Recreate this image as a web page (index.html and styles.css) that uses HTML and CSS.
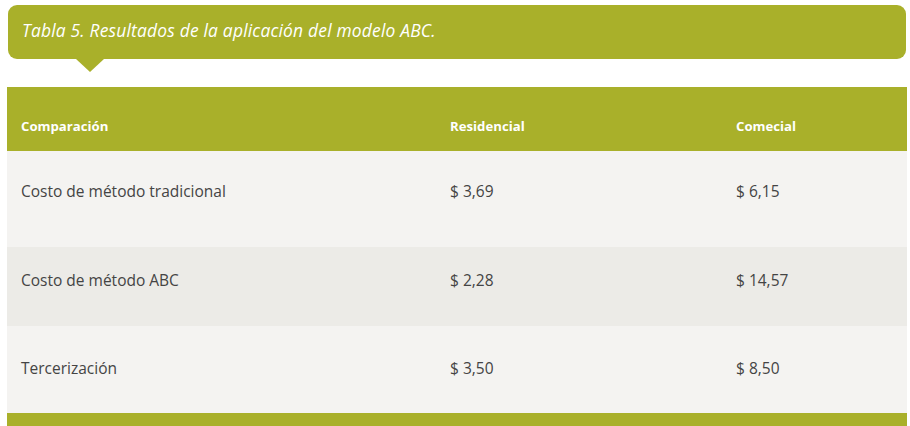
FILE: index.html
```html
<!DOCTYPE html>
<html lang="es">
<head>
<meta charset="utf-8">
<link rel="stylesheet" href="styles.css">
</head>
<body>
<div class="wrap">
  <div class="caption">
    <span class="caption-text">Tabla 5. Resultados de la aplicación del modelo ABC.</span>
  </div>
  <table class="data">
    <colgroup>
      <col class="c1"><col class="c2"><col class="c3">
    </colgroup>
    <thead>
      <tr><th>Comparación</th><th>Residencial</th><th>Comecial</th></tr>
    </thead>
    <tbody>
      <tr class="r1"><td>Costo de método tradicional</td><td>$ 3,69</td><td>$ 6,15</td></tr>
      <tr class="r2"><td>Costo de método ABC</td><td>$ 2,28</td><td>$ 14,57</td></tr>
      <tr class="r3"><td>Tercerización</td><td>$ 3,50</td><td>$ 8,50</td></tr>
    </tbody>
  </table>
</div>
</body>
</html>
```

FILE: styles.css
```css
html, body {
  margin: 0;
  padding: 0;
  background: #ffffff;
}
.wrap {
  width: 900px;
  margin-left: 7px;
  padding-top: 5px;
  font-family: "Open Sans", "DejaVu Sans", sans-serif;
}
.caption {
  position: relative;
  margin: 0 1px;
  height: 54px;
  background: #a9b02a;
  border-radius: 9px;
  display: flex;
  align-items: center;
  padding-left: 14px;
  box-sizing: border-box;
}
.caption::after {
  content: "";
  position: absolute;
  left: 68px;
  top: 54px;
  border-left: 14px solid transparent;
  border-right: 14px solid transparent;
  border-top: 13px solid #a9b02a;
}
.caption-text {
  color: #ffffff;
  font-style: italic;
  font-size: 17.4px;
  letter-spacing: 0.2px;
  position: relative;
  top: -2px;
}
.data {
  margin-top: 28px;
  width: 900px;
  border-collapse: separate;
  border-spacing: 0;
  table-layout: fixed;
  border-bottom: 14px solid #a9b02a;
}
.c1 { width: 429px; }
.c2 { width: 286px; }
.c3 { width: 185px; }
.data th {
  background: #a9b02a;
  color: #ffffff;
  font-weight: 700;
  font-size: 13.2px;
  text-align: left;
  height: 64px;
  padding: 14px 14px 0 14px;
  box-sizing: border-box;
}
.data td {
  color: #444444;
  font-size: 15.5px;
  line-height: 20px;
  text-align: left;
  vertical-align: top;
  padding: 0 14px;
  box-sizing: border-box;
}
.r1 { height: 96px; }
.r2 { height: 79px; }
.r3 { height: 87px; }
.r1 td { background: #f4f3f1; padding-top: 30px; }
.r2 td { background: #ecebe7; padding-top: 23px; }
.r3 td { background: #f4f3f1; padding-top: 32px; }
```
